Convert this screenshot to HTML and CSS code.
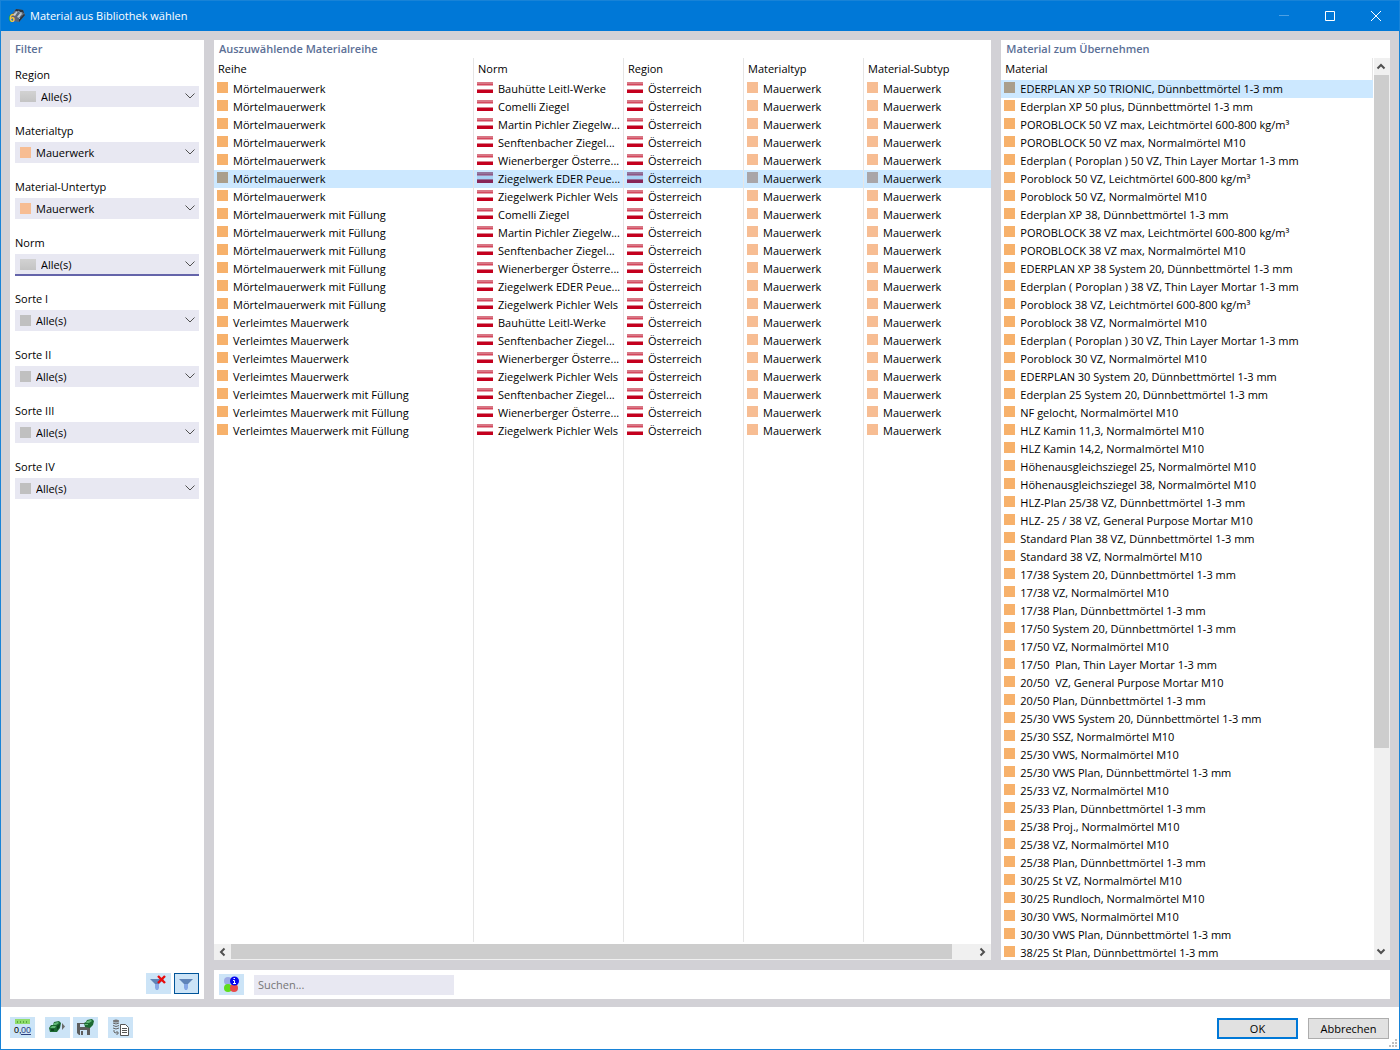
FILE: index.html
```
<!DOCTYPE html>
<html lang="de">
<head>
<meta charset="UTF-8">
<title>Material aus Bibliothek wählen</title>
<link rel="stylesheet" href="styles.css">
</head>
<body>
<div class="window">

  <header class="titlebar">
    <svg class="app-icon" width="16" height="16" viewBox="0 0 16 16">
      <path d="M2 7 7 1l7 1 2 5-6 7-6-1z" fill="#5a6675"/>
      <path d="M4 7 8 2l2 0-4 6zM8 9l4-5 2 0-4 6z" fill="#bcc8d4"/>
      <path d="M7 1l7 1 1 3-4-1-5-1zM10 14l6-7-1-1-5 5z" fill="#2a3440"/>
      <path d="M6 4l2 2M9 3l3 2M12 5l1 2M9 9l2 2" stroke="#93a5b6"/>
      <text class="app-six" x="0" y="14">6</text>
    </svg>
    <h1>Material aus Bibliothek wählen</h1>
    <button class="win-btn dim" aria-label="Minimieren"><svg width="10" height="10"><path d="M0 4.500h10" stroke="currentColor"/></svg></button>
    <button class="win-btn" aria-label="Maximieren"><svg width="10" height="10"><path d="M.5.5h9v9h-9z" fill="none" stroke="currentColor"/></svg></button>
    <button class="win-btn" aria-label="Schließen"><svg width="10" height="10"><path d="M0 0l10 10M10 0L0 10" stroke="currentColor"/></svg></button>
  </header>

  <main>
    <section class="panel filter">
      <h2>Filter</h2>
      <div class="fields">
        <div class="field">
          <label for="region">Region</label>
          <div class="combo wide"><i class="bar"></i><select id="region"><option>Alle(s)</option></select><svg width="10" height="6"><path d="M.5.5 5 5 9.500.5" /></svg></div>
        </div>
        <div class="field">
          <label for="typ">Materialtyp</label>
          <div class="combo"><i class="peach"></i><select id="typ"><option>Mauerwerk</option></select><svg width="10" height="6"><path d="M.5.5 5 5 9.500.5" /></svg></div>
        </div>
        <div class="field">
          <label for="untertyp">Material-Untertyp</label>
          <div class="combo"><i class="peach"></i><select id="untertyp"><option>Mauerwerk</option></select><svg width="10" height="6"><path d="M.5.5 5 5 9.500.5" /></svg></div>
        </div>
        <div class="field">
          <label for="norm">Norm</label>
          <div class="combo wide active"><i class="bar"></i><select id="norm"><option>Alle(s)</option></select><svg width="10" height="6"><path d="M.5.5 5 5 9.500.5" /></svg></div>
        </div>
        <div class="field">
          <label for="sorte1">Sorte I</label>
          <div class="combo"><i></i><select id="sorte1"><option>Alle(s)</option></select><svg width="10" height="6"><path d="M.5.5 5 5 9.500.5" /></svg></div>
        </div>
        <div class="field">
          <label for="sorte2">Sorte II</label>
          <div class="combo"><i></i><select id="sorte2"><option>Alle(s)</option></select><svg width="10" height="6"><path d="M.5.5 5 5 9.500.5" /></svg></div>
        </div>
        <div class="field">
          <label for="sorte3">Sorte III</label>
          <div class="combo"><i></i><select id="sorte3"><option>Alle(s)</option></select><svg width="10" height="6"><path d="M.5.5 5 5 9.500.5" /></svg></div>
        </div>
        <div class="field">
          <label for="sorte4">Sorte IV</label>
          <div class="combo"><i></i><select id="sorte4"><option>Alle(s)</option></select><svg width="10" height="6"><path d="M.5.5 5 5 9.500.5" /></svg></div>
        </div>
      </div>
      <div class="filter-tools">
        <button class="tool" aria-label="Filter löschen">
          <svg width="17" height="17" viewBox="0 0 17 17"><path d="M0 4h14l-5 5H5z" fill="#5f84b8"/><path d="M5 9h4v4l-1 2H6l-1-2z" fill="#86a8e6"/><path d="M8 1l7 7M15 1 8 8" stroke="#e80c0c" stroke-width="2.400"/></svg>
        </button>
        <button class="tool pressed" aria-label="Filter">
          <svg width="17" height="17" viewBox="0 0 17 17"><path d="M1 4h14l-5 5H6z" fill="#5f84b8"/><path d="M6 9h4v4l-1 2H7l-1-2z" fill="#86a8e6"/></svg>
        </button>
      </div>
    </section>

    <section class="panel series">
      <h2>Auszuwählende Materialreihe</h2>
      <div class="table-wrap">
        <table>
          <colgroup><col class="c-reihe"><col class="c-norm"><col class="c-mid"><col class="c-mid"><col></colgroup>
          <thead>
            <tr><th>Reihe</th><th>Norm</th><th>Region</th><th>Materialtyp</th><th>Material-Subtyp</th></tr>
          </thead>
          <tbody>
            <tr><td class="sw">Mörtelmauerwerk</td><td class="at">Bauhütte Leitl-Werke</td><td class="at">Österreich</td><td class="mw">Mauerwerk</td><td class="mw">Mauerwerk</td></tr>
            <tr><td class="sw">Mörtelmauerwerk</td><td class="at">Comelli Ziegel</td><td class="at">Österreich</td><td class="mw">Mauerwerk</td><td class="mw">Mauerwerk</td></tr>
            <tr><td class="sw">Mörtelmauerwerk</td><td class="at">Martin Pichler Ziegelw...</td><td class="at">Österreich</td><td class="mw">Mauerwerk</td><td class="mw">Mauerwerk</td></tr>
            <tr><td class="sw">Mörtelmauerwerk</td><td class="at">Senftenbacher Ziegel...</td><td class="at">Österreich</td><td class="mw">Mauerwerk</td><td class="mw">Mauerwerk</td></tr>
            <tr><td class="sw">Mörtelmauerwerk</td><td class="at">Wienerberger Österre...</td><td class="at">Österreich</td><td class="mw">Mauerwerk</td><td class="mw">Mauerwerk</td></tr>
            <tr class="selected"><td class="sw">Mörtelmauerwerk</td><td class="at">Ziegelwerk EDER Peue...</td><td class="at">Österreich</td><td class="mw">Mauerwerk</td><td class="mw">Mauerwerk</td></tr>
            <tr><td class="sw">Mörtelmauerwerk</td><td class="at">Ziegelwerk Pichler Wels</td><td class="at">Österreich</td><td class="mw">Mauerwerk</td><td class="mw">Mauerwerk</td></tr>
            <tr><td class="sw">Mörtelmauerwerk mit Füllung</td><td class="at">Comelli Ziegel</td><td class="at">Österreich</td><td class="mw">Mauerwerk</td><td class="mw">Mauerwerk</td></tr>
            <tr><td class="sw">Mörtelmauerwerk mit Füllung</td><td class="at">Martin Pichler Ziegelw...</td><td class="at">Österreich</td><td class="mw">Mauerwerk</td><td class="mw">Mauerwerk</td></tr>
            <tr><td class="sw">Mörtelmauerwerk mit Füllung</td><td class="at">Senftenbacher Ziegel...</td><td class="at">Österreich</td><td class="mw">Mauerwerk</td><td class="mw">Mauerwerk</td></tr>
            <tr><td class="sw">Mörtelmauerwerk mit Füllung</td><td class="at">Wienerberger Österre...</td><td class="at">Österreich</td><td class="mw">Mauerwerk</td><td class="mw">Mauerwerk</td></tr>
            <tr><td class="sw">Mörtelmauerwerk mit Füllung</td><td class="at">Ziegelwerk EDER Peue...</td><td class="at">Österreich</td><td class="mw">Mauerwerk</td><td class="mw">Mauerwerk</td></tr>
            <tr><td class="sw">Mörtelmauerwerk mit Füllung</td><td class="at">Ziegelwerk Pichler Wels</td><td class="at">Österreich</td><td class="mw">Mauerwerk</td><td class="mw">Mauerwerk</td></tr>
            <tr><td class="sw">Verleimtes Mauerwerk</td><td class="at">Bauhütte Leitl-Werke</td><td class="at">Österreich</td><td class="mw">Mauerwerk</td><td class="mw">Mauerwerk</td></tr>
            <tr><td class="sw">Verleimtes Mauerwerk</td><td class="at">Senftenbacher Ziegel...</td><td class="at">Österreich</td><td class="mw">Mauerwerk</td><td class="mw">Mauerwerk</td></tr>
            <tr><td class="sw">Verleimtes Mauerwerk</td><td class="at">Wienerberger Österre...</td><td class="at">Österreich</td><td class="mw">Mauerwerk</td><td class="mw">Mauerwerk</td></tr>
            <tr><td class="sw">Verleimtes Mauerwerk</td><td class="at">Ziegelwerk Pichler Wels</td><td class="at">Österreich</td><td class="mw">Mauerwerk</td><td class="mw">Mauerwerk</td></tr>
            <tr><td class="sw">Verleimtes Mauerwerk mit Füllung</td><td class="at">Senftenbacher Ziegel...</td><td class="at">Österreich</td><td class="mw">Mauerwerk</td><td class="mw">Mauerwerk</td></tr>
            <tr><td class="sw">Verleimtes Mauerwerk mit Füllung</td><td class="at">Wienerberger Österre...</td><td class="at">Österreich</td><td class="mw">Mauerwerk</td><td class="mw">Mauerwerk</td></tr>
            <tr><td class="sw">Verleimtes Mauerwerk mit Füllung</td><td class="at">Ziegelwerk Pichler Wels</td><td class="at">Österreich</td><td class="mw">Mauerwerk</td><td class="mw">Mauerwerk</td></tr>
            <tr class="rest"><td></td><td></td><td></td><td></td><td></td></tr>
          </tbody>
        </table>
      </div>
      <div class="scroll-x">
        <button aria-label="Nach links"><svg width="7" height="8"><path d="M5.500.5 2 4l3.500 3.500"/></svg></button>
        <div class="track"><div class="thumb"></div></div>
        <button aria-label="Nach rechts"><svg width="7" height="8"><path d="M1.500.5 5 4 1.500 7.500"/></svg></button>
      </div>
    </section>

    <section class="panel materials">
      <h2>Material zum Übernehmen</h2>
      <div class="list-row">
        <div class="table-wrap">
          <table>
            <thead><tr><th>Material</th></tr></thead>
            <tbody>
              <tr class="selected"><td class="sw">EDERPLAN XP 50 TRIONIC, Dünnbettmörtel 1-3 mm</td></tr>
              <tr><td class="sw">Ederplan XP 50 plus, Dünnbettmörtel 1-3 mm</td></tr>
              <tr><td class="sw">POROBLOCK 50 VZ max, Leichtmörtel 600-800 kg/m³</td></tr>
              <tr><td class="sw">POROBLOCK 50 VZ max, Normalmörtel M10</td></tr>
              <tr><td class="sw">Ederplan ( Poroplan ) 50 VZ, Thin Layer Mortar 1-3 mm</td></tr>
              <tr><td class="sw">Poroblock 50 VZ, Leichtmörtel 600-800 kg/m³</td></tr>
              <tr><td class="sw">Poroblock 50 VZ, Normalmörtel M10</td></tr>
              <tr><td class="sw">Ederplan XP 38, Dünnbettmörtel 1-3 mm</td></tr>
              <tr><td class="sw">POROBLOCK 38 VZ max, Leichtmörtel 600-800 kg/m³</td></tr>
              <tr><td class="sw">POROBLOCK 38 VZ max, Normalmörtel M10</td></tr>
              <tr><td class="sw">EDERPLAN XP 38 System 20, Dünnbettmörtel 1-3 mm</td></tr>
              <tr><td class="sw">Ederplan ( Poroplan ) 38 VZ, Thin Layer Mortar 1-3 mm</td></tr>
              <tr><td class="sw">Poroblock 38 VZ, Leichtmörtel 600-800 kg/m³</td></tr>
              <tr><td class="sw">Poroblock 38 VZ, Normalmörtel M10</td></tr>
              <tr><td class="sw">Ederplan ( Poroplan ) 30 VZ, Thin Layer Mortar 1-3 mm</td></tr>
              <tr><td class="sw">Poroblock 30 VZ, Normalmörtel M10</td></tr>
              <tr><td class="sw">EDERPLAN 30 System 20, Dünnbettmörtel 1-3 mm</td></tr>
              <tr><td class="sw">Ederplan 25 System 20, Dünnbettmörtel 1-3 mm</td></tr>
              <tr><td class="sw">NF gelocht, Normalmörtel M10</td></tr>
              <tr><td class="sw">HLZ Kamin 11,3, Normalmörtel M10</td></tr>
              <tr><td class="sw">HLZ Kamin 14,2, Normalmörtel M10</td></tr>
              <tr><td class="sw">Höhenausgleichsziegel 25, Normalmörtel M10</td></tr>
              <tr><td class="sw">Höhenausgleichsziegel 38, Normalmörtel M10</td></tr>
              <tr><td class="sw">HLZ-Plan 25/38 VZ, Dünnbettmörtel 1-3 mm</td></tr>
              <tr><td class="sw">HLZ- 25 / 38 VZ, General Purpose Mortar M10</td></tr>
              <tr><td class="sw">Standard Plan 38 VZ, Dünnbettmörtel 1-3 mm</td></tr>
              <tr><td class="sw">Standard 38 VZ, Normalmörtel M10</td></tr>
              <tr><td class="sw">17/38 System 20, Dünnbettmörtel 1-3 mm</td></tr>
              <tr><td class="sw">17/38 VZ, Normalmörtel M10</td></tr>
              <tr><td class="sw">17/38 Plan, Dünnbettmörtel 1-3 mm</td></tr>
              <tr><td class="sw">17/50 System 20, Dünnbettmörtel 1-3 mm</td></tr>
              <tr><td class="sw">17/50 VZ, Normalmörtel M10</td></tr>
              <tr><td class="sw">17/50  Plan, Thin Layer Mortar 1-3 mm</td></tr>
              <tr><td class="sw">20/50  VZ, General Purpose Mortar M10</td></tr>
              <tr><td class="sw">20/50 Plan, Dünnbettmörtel 1-3 mm</td></tr>
              <tr><td class="sw">25/30 VWS System 20, Dünnbettmörtel 1-3 mm</td></tr>
              <tr><td class="sw">25/30 SSZ, Normalmörtel M10</td></tr>
              <tr><td class="sw">25/30 VWS, Normalmörtel M10</td></tr>
              <tr><td class="sw">25/30 VWS Plan, Dünnbettmörtel 1-3 mm</td></tr>
              <tr><td class="sw">25/33 VZ, Normalmörtel M10</td></tr>
              <tr><td class="sw">25/33 Plan, Dünnbettmörtel 1-3 mm</td></tr>
              <tr><td class="sw">25/38 Proj., Normalmörtel M10</td></tr>
              <tr><td class="sw">25/38 VZ, Normalmörtel M10</td></tr>
              <tr><td class="sw">25/38 Plan, Dünnbettmörtel 1-3 mm</td></tr>
              <tr><td class="sw">30/25 St VZ, Normalmörtel M10</td></tr>
              <tr><td class="sw">30/25 Rundloch, Normalmörtel M10</td></tr>
              <tr><td class="sw">30/30 VWS, Normalmörtel M10</td></tr>
              <tr><td class="sw">30/30 VWS Plan, Dünnbettmörtel 1-3 mm</td></tr>
              <tr><td class="sw">38/25 St Plan, Dünnbettmörtel 1-3 mm</td></tr>
            </tbody>
          </table>
        </div>
        <div class="scroll-y">
          <button aria-label="Nach oben"><svg width="8" height="7"><path d="M.5 5.500 4 2l3.500 3.500"/></svg></button>
          <div class="track"><div class="thumb"></div></div>
          <button aria-label="Nach unten"><svg width="8" height="7"><path d="M.5 1.500 4 5l3.500-3.500"/></svg></button>
        </div>
      </div>
    </section>

    <section class="panel search">
      <button class="tool" aria-label="Info">
        <svg width="17" height="17" viewBox="0 0 17 17"><circle cx="5" cy="5" r="4" fill="#9daae6"/><circle cx="5" cy="12" r="4" fill="#5fdc1c"/><circle cx="11" cy="12" r="4" fill="#e84a4a"/><circle cx="11.500" cy="5" r="4.500" fill="#0606f0"/><path d="M10 4.500h1.500v3M10 7.500h3M10.500 2.500h1.500" stroke="#fff" fill="none"/></svg>
      </button>
      <input type="text" placeholder="Suchen..." aria-label="Suchen">
    </section>
  </main>

  <footer>
    <button class="tool" aria-label="Einheiten und Dezimalstellen">
      <svg width="17" height="17" viewBox="0 0 17 17"><path d="M1 0h15v5H1z" fill="#8fdc6c"/><path d="M3.500 2v2M6.500 2v2M9.500 2v2M12.500 2v2" stroke="#58a83c"/><text class="digits" x="0" y="14">0,</text><text class="digits blue" x="7" y="14">00</text><path d="M7 15.500h10" stroke="#2c3f80"/></svg>
    </button>
    <div class="tool-pair">
      <button class="tool" aria-label="Importieren">
        <svg width="17" height="17" viewBox="0 0 17 17"><path d="M0 9l2-3h2l1-3 5-1 2 2-1 5-3 4-7 0z" fill="#1c6a32"/><path d="M5 4l4-1 1 1-3 2H4zM1 9l2-2h4l-1 2z" fill="#62b878"/><path d="M2 10h3v2H2zM8 7l3-2-1 4-2 2z" fill="#0e4720"/><path d="M13 4l3 3.500-3 3.500z" fill="#6b6b6b"/></svg>
      </button>
      <button class="tool" aria-label="Speichern">
        <svg width="17" height="17" viewBox="0 0 17 17"><path d="M0 4h13v12H2l-2-2z" fill="#5d5d5d"/><path d="M3 5h6v3H3zM3 11h7v5H3z" fill="#cce4f7"/><path d="M4 12h2v4H4z" fill="#5d5d5d"/><path d="M7 4l2-1 1-2 5-1 2 2-1 4-3 3-5-1z" fill="#1c6a32"/><path d="M10 2l4-1 1 1-3 2H9zM8 5h3v1H8z" fill="#62b878"/></svg>
      </button>
    </div>
    <button class="tool" aria-label="Aus Datenbank kopieren">
      <svg width="17" height="17" viewBox="0 0 17 17"><ellipse cx="4" cy="2" rx="3" ry="1.500" fill="#777"/><path d="M1 4q3 2 6 0M1 6.500q3 2 6 0M1 9q3 2 6 0M2 11v2q0 1 4 1M4.500 12l2 2-2 2" stroke="#666" fill="none"/><path d="M8.500 5.500h5l3 3v8h-8z" fill="#fff" stroke="#555"/><path d="M10 9.500h5M10 11.500h5M10 13.500h5" stroke="#555"/></svg>
    </button>
    <div class="actions">
      <button class="btn primary">OK</button>
      <button class="btn">Abbrechen</button>
    </div>
    <svg class="grip" width="8" height="8"><path d="M6 0h2v2H6zM3 3h2v2H3zM6 3h2v2H6zM0 6h2v2H0zM3 6h2v2H3zM6 6h2v2H6z" fill="#bfbfbf"/></svg>
  </footer>
</div>
</body>
</html>
```
FILE: styles.css
```
* {
  box-sizing: border-box;
}
body {
  margin: 0;
  font: 11px/18px "Open Sans", "Noto Sans", sans-serif;
  color: #000;
}
button, select, input {
  font: inherit;
  color: inherit;
  margin: 0;
  padding: 0;
  border: 0;
  border-radius: 0;
}
h1, h2 {
  margin: 0;
}
svg {
  display: block;
  overflow: visible;
}
.window {
  display: flex;
  flex-direction: column;
  height: 100vh;
  border: 1px solid #1883d7;
  background: #fff;
}

/* title bar */
.titlebar {
  display: flex;
  align-items: center;
  flex: none;
  height: 30px;
  padding-left: 8px;
  background: #0078d7;
  color: #fff;
}
.titlebar h1 {
  flex: 1;
  margin-left: 5px;
  font-size: 11px;
  font-weight: 400;
}
.app-six {
  font: bold 10px "Open Sans", sans-serif;
  fill: #f5c731;
}
.win-btn {
  display: grid;
  place-items: center;
  width: 46px;
  height: 28px;
  background: none;
}
.win-btn.dim {
  color: #4da0e3;
}

/* panels */
main {
  flex: 1;
  min-height: 0;
  display: grid;
  grid-template-columns: 194px minmax(0, 2fr) minmax(0, 1fr);
  grid-template-rows: minmax(0, 1fr) 29px;
  gap: 10px;
  padding: 9px 9px 8px;
  background: #d2d1d6;
}
.panel {
  display: flex;
  flex-direction: column;
  min-height: 0;
  background: #fff;
}
.panel h2 {
  padding-left: 5px;
  font-size: 11px;
  font-weight: 600;
  color: #5b6f96;
}
.filter {
  grid-row: 1 / 3;
}
.search {
  grid-column: 2 / 4;
  flex-direction: row;
  align-items: center;
  gap: 10px;
  padding: 0 5px;
}
.search input {
  width: 200px;
  height: 20px;
  padding: 0 4px;
  background: #e8e8f2;
}
.search input::placeholder {
  color: #757575;
}

/* filter fields */
.fields {
  flex: 1;
  display: flex;
  flex-direction: column;
  gap: 17px;
  padding: 8px 5px;
}
.field {
  height: 39px;
}
.field label {
  display: block;
}
.combo {
  position: relative;
  height: 21px;
  margin-top: 2px;
  background: #e8e8f2;
}
.combo select {
  width: 100%;
  height: 21px;
  padding-left: 21px;
  appearance: none;
  background: none;
}
.combo.wide select {
  padding-left: 26px;
}
.combo i {
  position: absolute;
  left: 5px;
  top: 5px;
  width: 11px;
  height: 11px;
  background: #c0c0c0;
}
.combo i.peach {
  background: #f7bd93;
}
.combo i.bar {
  width: 16px;
  background: linear-gradient(#d2d2d2, #c4c4c4);
}
.combo svg {
  position: absolute;
  right: 4px;
  top: 7px;
  fill: none;
  stroke: #505050;
  pointer-events: none;
}
.combo.active {
  box-shadow: inset 0 -1px #6464aa, 0 1px #6464aa;
}
.filter-tools {
  display: flex;
  justify-content: flex-end;
  gap: 3px;
  padding: 5px;
}
.tool {
  display: grid;
  place-items: center;
  flex: none;
  width: 25px;
  height: 21px;
  background: #cce4f7;
}
.tool.pressed {
  border: 1px solid #005499;
}

/* tables */
.table-wrap {
  flex: 1;
  min-height: 0;
  min-width: 0;
  overflow: hidden;
}
table {
  width: 100%;
  table-layout: fixed;
  border-collapse: separate;
  border-spacing: 0;
}
.series table {
  height: 100%;
}
.c-reihe { width: 260px; }
.c-norm { width: 150px; }
.c-mid { width: 120px; }
th, td {
  height: 18px;
  padding: 0;
  overflow: hidden;
  white-space: pre;
  text-align: left;
}
th {
  height: 22px;
  padding-left: 4px;
  font-weight: 400;
}
.series th:not(:last-child),
.series td:not(:last-child),
.materials th {
  border-right: 1px solid #e5e5e5;
}
.rest td {
  height: auto;
}
.sw {
  padding-left: 19px;
  background: linear-gradient(#f7b16b, #f7b16b) 3px 2px / 11px 11px no-repeat;
}
.mw {
  padding-left: 19px;
  background: linear-gradient(#f7bd93, #f7bd93) 3px 2px / 11px 11px no-repeat;
}
.at {
  padding-left: 24px;
  background: linear-gradient(#d97684 2px, #d4475d 2px 3px, #e8a0aa 3px 4px, #fff 4px 7px, #d9808c 7px 8px, #c4001e 8px) 3px 2px / 16px 11px no-repeat;
}
.selected {
  background: #cce8ff;
}
.selected .sw {
  background-image: linear-gradient(#aa9e8b, #aa9e8b);
}
.selected .mw {
  background-image: linear-gradient(#a9a5a8, #a9a5a8);
}
.selected .at {
  background-image: linear-gradient(#94749c 2px, #8e5885 2px 3px, #a08cb4 3px 4px, #a8d2f5 4px 7px, #946f98 7px 8px, #882557 8px);
}

/* scroll bars */
.list-row {
  flex: 1;
  min-height: 0;
  display: flex;
  gap: 1px;
}
.scroll-x, .scroll-y {
  display: flex;
  flex: none;
  background: #f0f0f0;
}
.scroll-x {
  height: 16px;
  margin-top: 2px;
}
.scroll-y {
  flex-direction: column;
  width: 16px;
}
.scroll-x button, .scroll-y button {
  display: grid;
  place-items: center;
  flex: none;
  width: 17px;
  height: 17px;
  background: none;
}
.scroll-x button {
  height: 15px;
}
.scroll-y button {
  width: 15px;
}
.scroll-x svg, .scroll-y svg {
  fill: none;
  stroke: #505050;
  stroke-width: 2;
}
.track {
  flex: 1;
}
.thumb {
  background: #cdcdcd;
}
.scroll-x .thumb {
  width: 97%;
  height: 15px;
}
.scroll-y .thumb {
  width: 15px;
  height: 77.5%;
}

/* footer */
footer {
  position: relative;
  display: flex;
  align-items: flex-start;
  flex: none;
  gap: 10px;
  height: 42px;
  padding: 10px 10px 0 9px;
}
.tool-pair {
  display: flex;
  gap: 3px;
}
.digits {
  font: 9px "Liberation Sans", sans-serif;
}
.digits.blue {
  fill: #2c3f80;
}
.actions {
  display: flex;
  gap: 10px;
  margin-left: auto;
  padding-top: 1px;
}
.btn {
  width: 81px;
  height: 21px;
  border: 1px solid #adadad;
  background: #e1e1e1;
}
.btn.primary {
  border: 2px solid #0078d7;
}
.grip {
  position: absolute;
  right: 2px;
  bottom: 2px;
}
```
